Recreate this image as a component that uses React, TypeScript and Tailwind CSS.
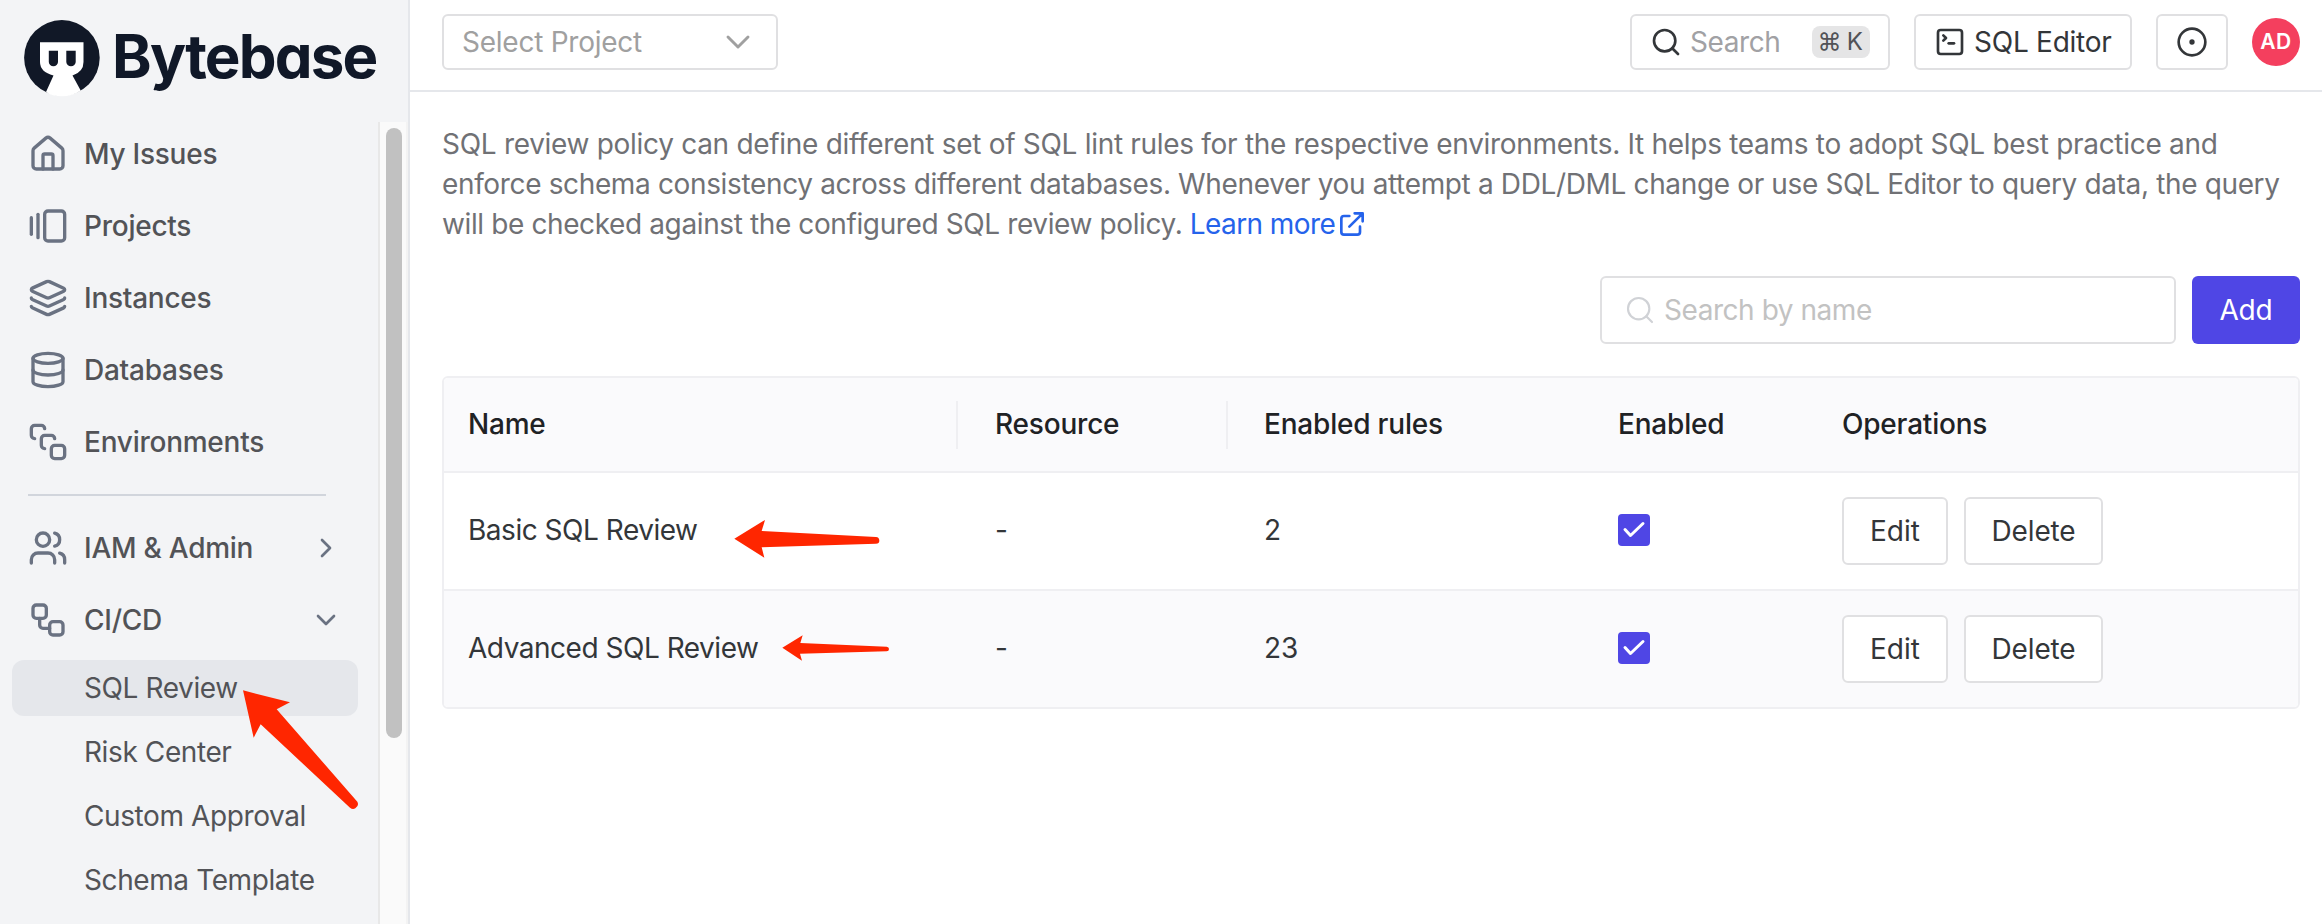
import React from "react";
import {
  Home, GalleryHorizontalEnd, Layers, Database, Workflow, SquareStack, Users,
  ChevronRight, ChevronDown, Search, SquareTerminal, CircleDot,
} from "lucide-react";

const navIcon = "w-10 h-10 text-gray-500 shrink-0";

function LogoMark() {
  return (
    <svg className="w-[76px] h-[78px] shrink-0" viewBox="0 0 76 78">
      <circle cx="37.900" cy="38.800" r="37.800" fill="#111827" />
      <path d="M16 23.300H59.500V43Q59.500 53 48.500 56.500L56.700 71.500Q49 77.300 38 77.300Q28 77.300 22 73L29.500 56.500Q16 53 16 43Z" fill="#fff" />
      <path d="M24.800 31.700H34V43a4.600 4.200 0 0 1-9.200 0ZM42.300 31.700H51.700V43a4.700 4.200 0 0 1-9.400 0Z" fill="#111827" />
    </svg>
  );
}

function NavItem({ icon, label, trailing }: { icon: React.ReactNode; label: string; trailing?: React.ReactNode }) {
  return (
    <div className="flex h-[72px] items-center">
      {icon}
      <span className="ml-4 flex-1 text-[28px] font-medium tracking-[-0.25px] text-[#525357]">{label}</span>
      {trailing}
    </div>
  );
}

function SubItem({ label, active }: { label: string; active?: boolean }) {
  return (
    <div className={active ? "flex h-14 items-center rounded-xl bg-gray-200 pl-[72px]" : "flex h-14 items-center pl-[72px]"}>
      {label}
    </div>
  );
}

function Sidebar() {
  return (
    <aside className="flex w-[410px] shrink-0 flex-col border-r-2 border-[#e5e7eb] bg-gray-100">
      <div className="flex h-[122px] shrink-0 items-start pl-6 pt-[19px]">
        <LogoMark />
        <span className="-mt-px ml-3 text-[60px] leading-[76px] font-bold tracking-[-1.8px] text-gray-900 [font-feature-settings:'cv11']">Bytebase</span>
      </div>
      <div className="flex min-h-0 flex-1">
        <nav className="flex w-[378px] flex-col overflow-hidden pl-3 pr-5">
          <div className="-mt-1 pl-4 pr-4">
            <NavItem icon={<Home className={navIcon} />} label="My Issues" />
            <NavItem icon={<GalleryHorizontalEnd className={navIcon} />} label="Projects" />
            <NavItem icon={<Layers className={navIcon} />} label="Instances" />
            <NavItem icon={<Database className={navIcon} />} label="Databases" />
            <NavItem icon={<SquareStack className={navIcon} />} label="Environments" />
          </div>
          <div className="ml-4 mr-8 mt-4 mb-4 h-0.5 bg-gray-300" />
          <div className="pl-4 pr-4">
            <NavItem icon={<Users className={navIcon} />} label="IAM & Admin" trailing={<ChevronRight className="w-8 h-8 text-gray-500" />} />
            <NavItem icon={<Workflow className={navIcon} />} label="CI/CD" trailing={<ChevronDown className="w-8 h-8 text-gray-500" />} />
          </div>
          <div className="mt-1 flex flex-col gap-2 text-[28px] tracking-[-0.4px] text-[#525357]">
            <SubItem label="SQL Review" active />
            <SubItem label="Risk Center" />
            <SubItem label="Custom Approval" />
            <SubItem label="Schema Template" />
          </div>
        </nav>
        <div className="w-[30px] border-x-2 border-l-[#e8e8e8] border-r-[#f3f3f3] bg-[#fafafa] pl-1.5 pt-1.5">
          <div className="h-[610px] w-4 rounded-full bg-[#c1c1c1]" />
        </div>
      </div>
    </aside>
  );
}

function TopBar() {
  return (
    <header className="flex h-[92px] shrink-0 items-start border-b-2 border-[#e5e7eb] pl-8 pr-[22px] pt-3.5 text-[28px] tracking-[-0.25px]">
      <div className="flex h-14 w-[336px] items-center rounded-md border-2 border-[#e0e0e2] pl-[18px] pr-[18px] text-[#a0a0a0]">
        <span className="flex-1">Select Project</span>
        <ChevronDown className="h-10 w-10" strokeWidth={1.75} />
      </div>
      <div className="ml-auto flex gap-6">
        <div className="flex h-14 w-[260px] items-center rounded-md border-2 border-[#e0e0e2] pl-[18px] pr-[18px]">
          <Search className="h-8 w-8 text-[#333639]" />
          <span className="ml-2 flex-1 tracking-[-0.4px] text-[#a1a1a4]">Search</span>
          <span className="flex h-8 w-[58px] items-center justify-center rounded-lg bg-[#e5e5e6] pr-0.5 text-[24px] whitespace-nowrap [word-spacing:-1px] text-[#525357]">⌘ K</span>
        </div>
        <div className="flex h-14 w-[218px] items-center rounded-md border-2 border-[#e0e0e2] pl-[18px] text-[#333639]">
          <SquareTerminal className="h-8 w-8" />
          <span className="ml-2">SQL Editor</span>
        </div>
        <div className="flex h-14 w-[72px] items-center justify-center rounded-md border-2 border-[#e0e0e2]">
          <CircleDot className="h-8 w-8 text-[#333639]" />
        </div>
        <div className="mt-1 flex h-12 w-12 items-center justify-center rounded-full bg-[#f43f5e] text-[21px] font-semibold tracking-[0.5px] text-white">AD</div>
      </div>
    </header>
  );
}

const columns = "grid grid-cols-[514px_270px_390px_224px_1fr]";

function Row({ name, rules, striped }: { name: string; rules: string; striped?: boolean }) {
  return (
    <div className={`${columns} items-center h-[116px] ${striped ? "bg-[#fafafc]" : "bg-white"}`}>
      <span className="pb-0.5 pl-6 tracking-[-0.48px]">{name}</span>
      <span className="pb-0.5 pl-[37px]">-</span>
      <span className="pb-0.5 pl-9">{rules}</span>
      <span className="mb-0.5 flex h-8 w-8 items-center justify-center rounded-[4px] bg-[#4f46e5]">
        <svg className="h-6 w-6" viewBox="0 0 24 24" fill="none" stroke="#fff" strokeWidth="3" strokeLinecap="round" strokeLinejoin="round">
          <path d="M3 11.500l5.500 6L21 5.500" />
        </svg>
      </span>
      <span className="flex gap-4">
        <span className="flex h-[68px] w-[106px] items-center justify-center rounded-md border-2 border-[#e0e0e2] bg-white">Edit</span>
        <span className="flex h-[68px] w-[139px] items-center justify-center rounded-md border-2 border-[#e0e0e2] bg-white tracking-[-0.15px]">Delete</span>
      </span>
    </div>
  );
}

function Arrow({ className, viewBox, d }: { className: string; viewBox: string; d: string }) {
  return (
    <svg className={`absolute ${className}`} viewBox={viewBox}>
      <path d={d} fill="#ff2600" />
    </svg>
  );
}

export default function App() {
  return (
    <div className="relative flex h-[924px] w-[2322px] overflow-hidden bg-white font-['Inter',sans-serif]">
      <Sidebar />
      <div className="flex min-w-0 flex-1 flex-col">
        <TopBar />
        <main className="pl-8 pr-[22px] pt-8">
          <p className="whitespace-nowrap text-[28px] leading-10 tracking-[-0.3px] text-[#707175]">
            SQL review policy can define different set of SQL lint rules for the respective environments. It helps teams to adopt SQL best practice and<br />
            <span className="tracking-[-0.355px]">enforce schema consistency across different databases. Whenever you attempt a DDL/DML change or use SQL Editor to query data, the query</span><br />
            <span className="tracking-[-0.385px]">will be checked against the configured SQL review policy. </span>
            <a className="inline-flex items-center tracking-[-0.6px] text-[#2563eb]">
              Learn more
              <svg className="ml-px h-8 w-8" viewBox="0 0 24 24" fill="none" stroke="currentColor" strokeWidth="2" strokeLinecap="round" strokeLinejoin="round">
                <path d="M10 6H6a2 2 0 0 0-2 2v10a2 2 0 0 0 2 2h10a2 2 0 0 0 2-2v-4M14 4h6m0 0v6m0-6L10 14" />
              </svg>
            </a>
          </p>
          <div className="mt-8 flex justify-end gap-4 text-[28px]">
            <div className="flex h-[68px] w-[576px] items-center rounded-md border-2 border-[#e0e0e2] pl-[22px] tracking-[-0.45px] text-[#c2c2c2]">
              <Search className="h-8 w-8 text-[#d0d2d6]" strokeWidth={1.6} />
              <span className="ml-2">Search by name</span>
            </div>
            <div className="flex h-[68px] w-[108px] items-center justify-center rounded-md bg-[#4f46e5] tracking-[-0.2px] text-white">Add</div>
          </div>
          <div className="mt-8 overflow-hidden rounded-md border-2 border-[#efeff2] text-[28px] text-[#333639]">
            <div className={`${columns} h-[95px] items-center border-b-2 border-[#efeff2] bg-[#fafafc] font-medium tracking-[-0.2px] text-[#1f2225]`}>
              <span className="flex h-12 items-center border-r-2 border-[#efeff2] pb-0.5 pl-6">Name</span>
              <span className="flex h-12 items-center border-r-2 border-[#efeff2] pb-0.5 pl-[37px]">Resource</span>
              <span className="pb-0.5 pl-9">Enabled rules</span>
              <span className="pb-0.5">Enabled</span>
              <span className="pb-0.5">Operations</span>
            </div>
            <Row name="Basic SQL Review" rules="2" />
            <div className="h-0.5 bg-[#efeff2]" />
            <Row name="Advanced SQL Review" rules="23" striped />
          </div>
        </main>
      </div>
      <Arrow
        className="left-[240px] top-[690px] h-[120px] w-[120px]"
        viewBox="720 570 360 360"
        d="M729 571L870 607L830 628L1072 905Q1078 917 1066 925Q1058 930 1050 923L782 673L761 713Z"
      />
      <Arrow
        className="left-[730px] top-[515px] h-[50px] w-[160px]"
        viewBox="30 45 480 150"
        d="M43 116L135 60L125 93L468 111Q478 112 478 122Q478 131 468 131L125 142L133 173Z"
      />
      <Arrow
        className="left-[780px] top-[630px] h-10 w-[120px]"
        viewBox="180 390 360 120"
        d="M187 443L248 406L241 429L500 440Q507 441 507 447Q507 454 500 454L240 461L246 482Z"
      />
    </div>
  );
}
